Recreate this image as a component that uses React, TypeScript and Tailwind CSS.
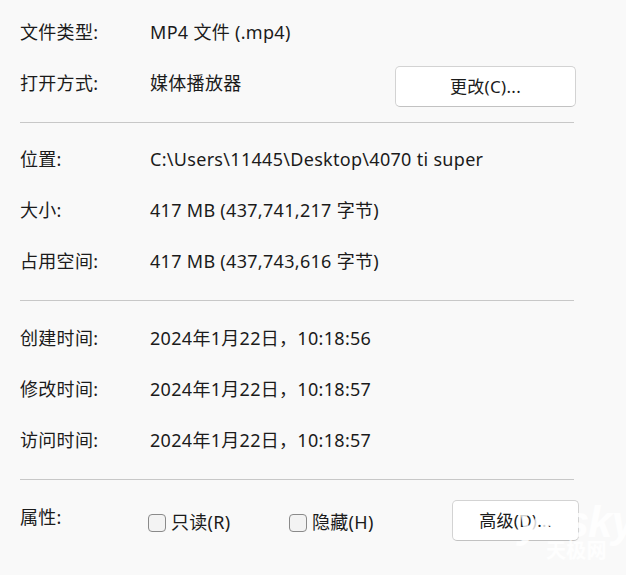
import React from "react";

const font = { fontFamily: '"Noto Sans", "Noto Sans CJK SC", sans-serif' };

function Row({ label, value, children }: { label: string; value?: string; children?: React.ReactNode }) {
  return (
    <div className="flex h-[51px] items-center">
      <div className="w-[130px] shrink-0">{label}</div>
      {value !== undefined && <div className="whitespace-nowrap">{value}</div>}
      {children}
    </div>
  );
}

function Sep({ className }: { className: string }) {
  return <div className={"h-px w-[554px] bg-[#c8c8c8] " + className} />;
}

function Check({ label }: { label: string }) {
  return (
    <label className="flex items-center gap-[5px]">
      <span className="h-[18px] w-[18px] rounded-[4px] border border-[#8a8a8a] bg-[#f3f3f3]" />
      <span>{label}</span>
    </label>
  );
}

export default function App() {
  return (
    <div
      className="relative h-[575px] w-[626px] overflow-hidden bg-[#f9f9f9] px-[20px] pt-[7px] text-[18px] tracking-[0.3px] text-[#1b1b1b]"
      style={font}
    >
      <Row label="文件类型:" value="MP4 文件 (.mp4)" />
      <Row label="打开方式:">
        <div className="w-[245px]">媒体播放器</div>
        <button className="mt-[6px] h-[41px] w-[181px] rounded-[5px] border border-[#d3d3d3] border-b-[#c2c2c2] bg-white text-[17px] text-[#1b1b1b]">
          更改(C)...
        </button>
      </Row>

      <Sep className="mt-[13px]" />
      <div className="pt-[11px]">
        <Row label="位置:" value="C:\Users\11445\Desktop\4070 ti super" />
        <Row label="大小:" value="417 MB (437,741,217 字节)" />
        <Row label="占用空间:" value="417 MB (437,743,616 字节)" />
      </div>

      <Sep className="mt-[13px]" />
      <div className="pt-[12px]">
        <Row label="创建时间:" value="2024年1月22日，10:18:56" />
        <Row label="修改时间:" value="2024年1月22日，10:18:57" />
        <Row label="访问时间:" value="2024年1月22日，10:18:57" />
      </div>

      <Sep className="mt-[13px]" />
      <div className="flex items-center pt-[20px]">
        <div className="w-[128px] shrink-0 self-start pt-[4px]">属性:</div>
        <div className="mt-[4px] w-[141px]">
          <Check label="只读(R)" />
        </div>
        <div className="mt-[4px] w-[163px]">
          <Check label="隐藏(H)" />
        </div>
        <button className="h-[41px] w-[127px] rounded-[5px] border border-[#d3d3d3] border-b-[#c2c2c2] bg-white text-[17px] text-[#1b1b1b]">
          高级(D)...
        </button>
      </div>

      <div className="pointer-events-none absolute left-[518px] top-[500px] flex flex-col items-center leading-none text-white/80">
        <span className="text-[44px] font-bold italic tracking-tight" style={{ fontFamily: '"Liberation Sans", sans-serif' }}>
          yesky
        </span>
        <span className="-mt-[4px] text-[20px] font-bold" style={{ fontFamily: '"Noto Sans CJK SC", sans-serif' }}>
          天极网
        </span>
      </div>
    </div>
  );
}
